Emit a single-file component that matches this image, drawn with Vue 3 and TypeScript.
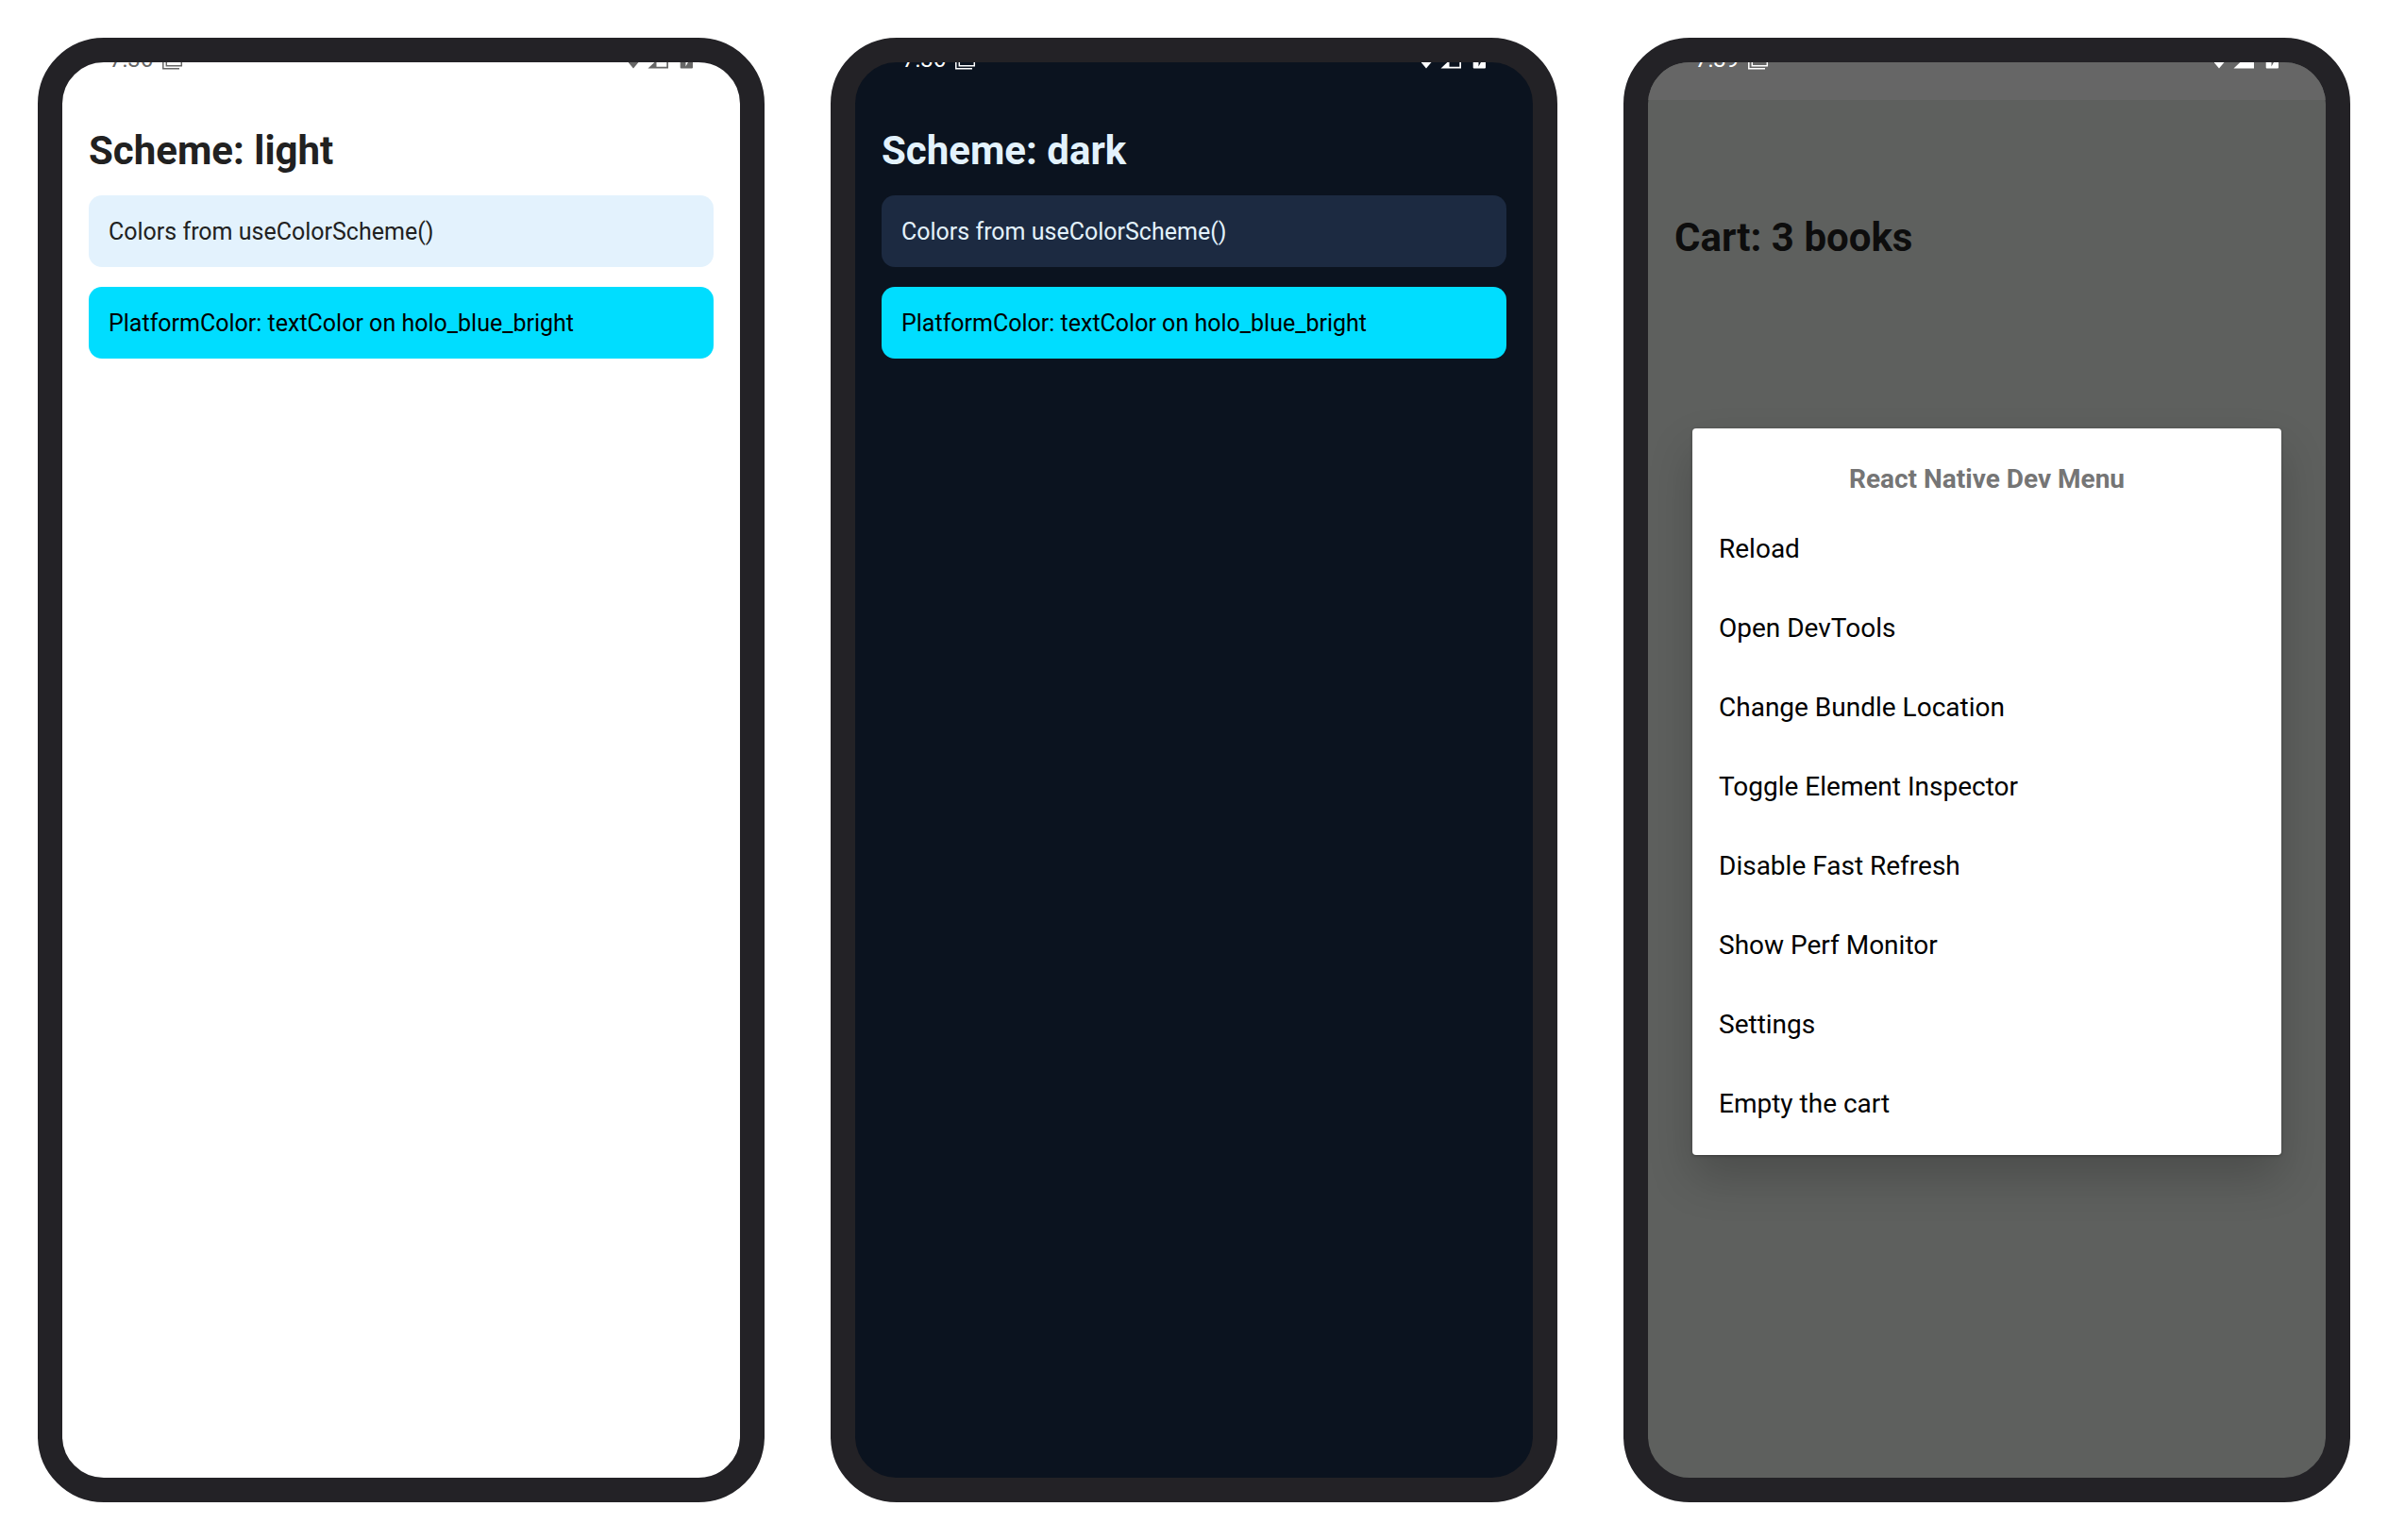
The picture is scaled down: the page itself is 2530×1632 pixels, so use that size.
<script setup lang="ts">
interface Phone {
  id: string
  time: string
  title: string
  fullSignal: boolean
  cards: string[]
  menu: string[]
}

const cards = ['Colors from useColorScheme()', 'PlatformColor: textColor on holo_blue_bright']

const phones: Phone[] = [
  { id: 'light', time: '7:36', title: 'Scheme: light', fullSignal: false, cards, menu: [] },
  { id: 'dark', time: '7:36', title: 'Scheme: dark', fullSignal: false, cards, menu: [] },
  {
    id: 'cart',
    time: '7:39',
    title: 'Cart: 3 books',
    fullSignal: true,
    cards: [],
    menu: [
      'Reload',
      'Open DevTools',
      'Change Bundle Location',
      'Toggle Element Inspector',
      'Disable Fast Refresh',
      'Show Perf Monitor',
      'Settings',
      'Empty the cart',
    ],
  },
]
</script>

<template>
  <main class="gallery">
    <section v-for="phone in phones" :key="phone.id" class="phone" :class="phone.id">
      <div class="status-bar">
        <div class="status-row">
          <span class="time">{{ phone.time }}</span>
          <svg class="shots" width="22" height="24" viewBox="0 0 22 24" fill="none" stroke="currentColor" stroke-width="1.5" aria-hidden="true">
            <path d="M0.8 5V21.8H18" />
            <path d="M4.3 2H20.3V18.8H4.3Z" />
          </svg>
          <svg class="system" width="68" height="24" viewBox="0 0 68 24" fill="currentColor" aria-hidden="true">
            <path d="M5 21.5L-6 8.5C0 3.5 10 3.5 16 8.5Z" />
            <path v-if="phone.fullSignal" d="M20.5 21.6L42 1V21.6Z" />
            <path v-else fill-rule="evenodd" d="M20.5 21.6L42 1V21.6ZM29.5 14V19.8H40.3V14Z" />
            <path fill-rule="evenodd" d="M54.7 4H68V20.5Q68 21.6 67 21.6H55.7Q54.7 21.6 54.7 20.5ZM62 8L58 14.5H60.5V19.5L64 13H62Z" />
          </svg>
        </div>
      </div>
      <div class="page">
        <h1>{{ phone.title }}</h1>
        <p v-for="card in phone.cards" :key="card" class="card">{{ card }}</p>
      </div>
      <div v-if="phone.menu.length" class="overlay">
        <div class="dialog" role="dialog" aria-labelledby="menu-title">
          <h2 id="menu-title">React Native Dev Menu</h2>
          <button v-for="item in phone.menu" :key="item" type="button">{{ item }}</button>
        </div>
      </div>
    </section>
  </main>
</template>

<style>
body {
  margin: 0;
  background: #fff;
}
</style>

<style scoped>
.gallery {
  display: flex;
  gap: 70px;
  padding: 40px;
  font-family: Roboto, sans-serif;
}

.phone {
  position: relative;
  flex: 1;
  box-sizing: border-box;
  aspect-ratio: 770 / 1552;
  border: 26px solid #232226;
  border-radius: 70px;
  overflow: hidden;
  display: flex;
  flex-direction: column;
}

.status-bar {
  height: 40px;
  overflow: hidden;
}

/* The row starts above the screen edge, so the bezel covers its upper part. */
.status-row {
  display: flex;
  align-items: center;
  gap: 10px;
  height: 28px;
  margin-top: -17px;
  padding: 0 50px;
}

.time {
  font-size: 24px;
  line-height: 28px;
}

.system {
  margin-left: auto;
}

.page {
  flex: 1;
  display: flex;
  flex-direction: column;
  gap: 21px;
  padding: 28px;
}

h1 {
  margin: 0;
  font-size: 42px;
  line-height: 52px;
  font-weight: 700;
}

.card {
  margin: 0;
  padding: 22px 21px 20px;
  border-radius: 14px;
  font-size: 25px;
  line-height: 34px;
}

.card:last-child {
  background: #00ddff;
  color: #000;
}

.light {
  background: #fff;
  color: #212121;
}

.light .status-bar {
  color: #666;
}

.light .card:not(:last-child) {
  background: #e3f2fd;
}

.dark {
  background: #0b131f;
  color: #e3f2fd;
}

.dark .status-bar {
  color: #fff;
}

.dark .card:not(:last-child) {
  background: #1c2a41;
}

.cart {
  background: #5e605e;
  color: #0d0d0d;
}

.cart .status-bar {
  background: #666;
  color: #fff;
}

.cart .page {
  padding-top: 120px;
}

.overlay {
  position: absolute;
  inset: 0;
  display: flex;
  flex-direction: column;
  justify-content: center;
  padding: 46px 47px 0;
}

.dialog {
  display: flex;
  flex-direction: column;
  padding: 36px 0 13px;
  border-radius: 4px;
  background: #fff;
  box-shadow: 0 24px 48px rgba(0, 0, 0, 0.2), 0 1px 3px rgba(0, 0, 0, 0.3);
}

h2 {
  margin: 0 0 13px;
  font-size: 28px;
  line-height: 36px;
  font-weight: 700;
  text-align: center;
  color: #757575;
}

button {
  height: 84px;
  padding: 0 28px;
  border: 0;
  background: none;
  font-family: inherit;
  font-size: 28px;
  text-align: left;
  color: #000;
}
</style>
